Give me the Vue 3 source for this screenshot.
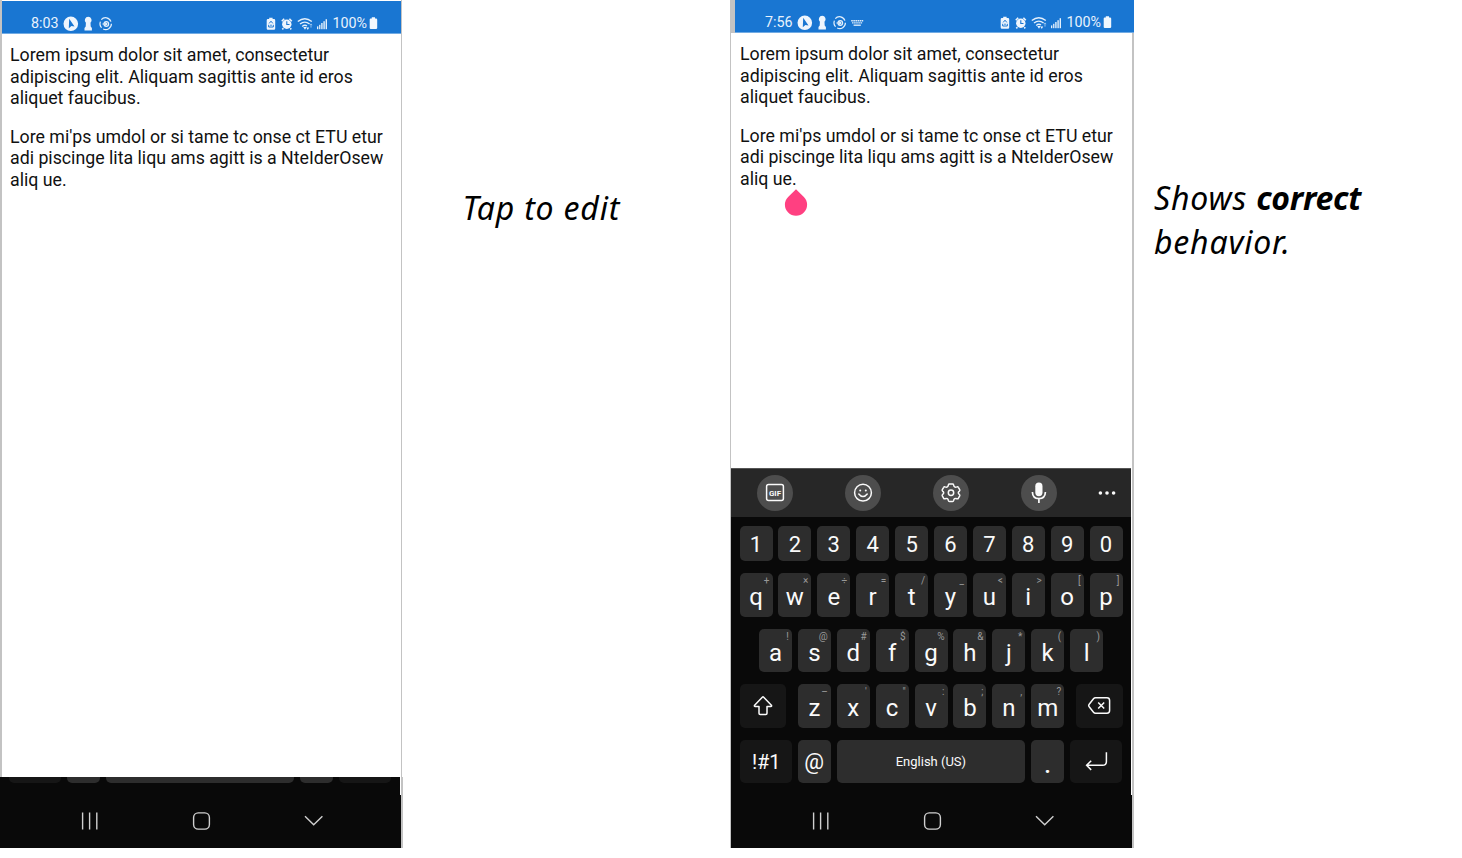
<script setup>
const paragraphs = [
  ['Lorem ipsum dolor sit amet, consectetur', 'adipiscing elit. Aliquam sagittis ante id eros', 'aliquet faucibus.'],
  ["Lore mi'ps umdol or si tame tc onse ct ETU etur", 'adi piscinge lita liqu ams agitt is a NteIderOsew', 'aliq ue.'],
]
const phones = [
  { id: 'first', time: '8:03', keyboard: false },
  { id: 'second', time: '7:56', keyboard: true },
]
const digits = ['1', '2', '3', '4', '5', '6', '7', '8', '9', '0']
const pair = (letters, hints) => [...letters].map((c, i) => ({ c, hint: hints[i] }))
const rowQ = pair('qwertyuiop', '+×÷=/_<>[]')
const rowA = pair('asdfghjkl', '!@#$%&*()')
const rowZ = pair('zxcvbnm', "–'\":;,?")
</script>

<template>
  <main class="board">
    <template v-for="p in phones" :key="p.id">
      <section class="phone" :class="p.id">
        <header class="status">
          <span class="clock">{{ p.time }}</span>
          <svg class="notif" width="96" height="20" viewBox="0 0 96 20">
            <circle cx="8.800" cy="10.800" r="7.300" fill="#eef5fd" />
            <path d="M7.200 5.800 L12.500 13.600 L9.400 12.900 L6.800 15.200 Z" fill="#1976d2" />
            <path d="M26.200 3.800 a3.400 3.400 0 0 1 2.300 5.900 L28.700 13.400 L29.900 15 V17.600 H22.500 V15 L23.700 13.400 L23.900 9.700 A3.400 3.400 0 0 1 26.200 3.800Z" fill="#eef5fd" />
            <g fill="none" stroke="#e4f0fc" stroke-width="1.200">
              <path d="M39.300 6.600 A5.700 5.700 0 0 1 48.900 8.600" />
              <path d="M49.400 10.800 A5.700 5.700 0 0 1 41.200 16" />
              <path d="M39.600 14.600 A5.700 5.700 0 0 1 38.400 8.600" />
              <circle cx="44.300" cy="11" r="2.300" />
              <path d="M40.400 11 H44.800 M43.300 9.500 L44.900 11 L43.300 12.500" />
            </g>
            <g v-if="p.keyboard" stroke="#dcebfa" stroke-width="1.400" fill="none">
              <path d="M55.200 8.800 H67.200" stroke-dasharray="1.600 .5" />
              <path d="M56 10.900 H66.600" stroke-dasharray="1.600 .5" />
              <path d="M57.600 13.200 H64.800" />
            </g>
          </svg>
          <svg class="system" width="66" height="20" viewBox="0 0 66 20">
            <path d="M3.200 4.800 h3.400 v1.300 h1.400 q1.200 0 1.200 1.200 V15.500 q0 1.200 -1.200 1.200 H1.900 q-1.200 0 -1.200 -1.200 V7.300 q0 -1.200 1.200 -1.200 h1.300Z" fill="#eef5fd" />
            <path d="M3.200 10.400 L5 8.200 L6.800 10.400 M2.700 11.800 V14 H7.300 V11.800 M4.200 12.200 H5.800" stroke="#1976d2" stroke-width="1" fill="none" />
            <circle cx="20.800" cy="11.200" r="4.700" fill="#eef5fd" />
            <path d="M20.800 8.200 V11.500 H23.500" fill="none" stroke="#1976d2" stroke-width="1.100" />
            <path d="M15.800 8.200 L18.200 5.800 M23.400 5.800 L25.800 8.200 M17.400 15.200 L16.300 16.400 M24.200 15.200 L25.300 16.400" stroke="#eef5fd" stroke-width="1.600" />
            <g fill="none" stroke="#e4f0fc" stroke-width="1.350">
              <path d="M31.800 8.500 Q38.800 2.900 45.800 8.500" />
              <path d="M34 11.100 Q38.800 7.100 43.600 11.100" />
              <path d="M36.200 13.500 Q38.800 11.300 41 13.100" />
            </g>
            <path d="M37.200 14 H40.600 L39 16.800Z M40.400 14.600 h2.800 l-1.400 2.400Z" fill="#eef5fd" />
            <path d="M45 14.600 V11 M43.900 12.100 L45 10.900 L46.100 12.100" stroke="#9fc7ef" fill="none" stroke-width=".9" />
            <g fill="#e4f0fc">
              <rect x="51" y="13.400" width="1.300" height="2.800" />
              <rect x="53.100" y="11.800" width="1.300" height="4.400" />
              <rect x="55.200" y="10" width="1.400" height="6.200" />
              <rect x="57.400" y="8.200" width="1.400" height="8" />
              <rect x="59.600" y="6.200" width="1.400" height="10" />
            </g>
          </svg>
          <span class="percent">100%</span>
          <svg class="battery" width="9" height="14" viewBox="0 0 9 14">
            <path d="M2.800 1.200 H6 V2.400 H7 Q8.200 2.400 8.200 3.600 V11.900 Q8.200 13 7 13 H1.800 Q.7 13 .7 11.900 V3.600 Q.7 2.400 1.800 2.400 H2.800Z" fill="#f1f7fe" />
          </svg>
        </header>

        <article class="doc">
          <p v-for="(lines, i) in paragraphs" :key="i">
            <span v-for="line in lines" :key="line" class="line">{{ line }}</span>
          </p>
          <svg v-if="p.keyboard" class="caret" width="24" height="28" viewBox="0 0 24 28">
            <path d="M12 .3 L19.900 7.900 A11.100 11.100 0 1 1 4.100 7.900Z" fill="#ff4081" />
          </svg>
        </article>

        <div v-if="p.keyboard" class="keyboard">
          <div class="tools">
            <span class="tool">
              <svg width="36" height="36" viewBox="0 0 36 36">
                <rect x="9.600" y="9.600" width="16.800" height="16" rx="2" fill="none" stroke="#fafafa" stroke-width="1.500" />
                <text x="18" y="20.500" text-anchor="middle" class="gif">GIF</text>
              </svg>
            </span>
            <span class="tool">
              <svg width="36" height="36" viewBox="0 0 36 36" fill="none" stroke="#fafafa" stroke-width="1.500">
                <circle cx="18" cy="17.700" r="8.400" />
                <path d="M13.800 19 Q18 24.200 22.200 19" stroke-linecap="round" />
                <circle cx="15.200" cy="15.400" r="1" fill="#fafafa" stroke="none" />
                <circle cx="20.800" cy="15.400" r="1" fill="#fafafa" stroke="none" />
              </svg>
            </span>
            <span class="tool">
              <svg width="36" height="36" viewBox="0 0 36 36" fill="none" stroke="#fafafa" stroke-width="1.500" stroke-linejoin="round">
                <path d="M16.400 9 H19.600 Q20.400 9 20.600 9.900 Q21 12.900 23.900 11.900 Q24.900 11.500 25.300 12.300 L26.700 14.700 Q27.100 15.500 26.400 16.100 Q24.200 17.800 26.400 19.500 Q27.100 20.100 26.700 20.900 L25.300 23.300 Q24.900 24.100 23.900 23.700 Q21 22.700 20.600 25.700 Q20.400 26.600 19.600 26.600 H16.400 Q15.600 26.600 15.400 25.700 Q15 22.700 12.100 23.700 Q11.100 24.100 10.700 23.300 L9.300 20.900 Q8.900 20.100 9.600 19.500 Q11.800 17.800 9.600 16.100 Q8.900 15.500 9.300 14.700 L10.700 12.300 Q11.100 11.500 12.100 11.900 Q15 12.900 15.400 9.900 Q15.600 9 16.400 9Z" />
                <circle cx="18" cy="17.800" r="2.700" />
              </svg>
            </span>
            <span class="tool">
              <svg width="36" height="36" viewBox="0 0 36 36">
                <rect x="14.300" y="7.600" width="7.200" height="13.600" rx="3.600" fill="#fafafa" />
                <path d="M11.400 17 Q11.600 23.600 17.900 23.600 Q24.200 23.600 24.400 17 M17.900 23.600 V28" fill="none" stroke="#fafafa" stroke-width="1.700" />
              </svg>
            </span>
            <svg class="more" width="18" height="6" viewBox="0 0 18 6" fill="#fafafa">
              <circle cx="2.400" cy="3" r="1.800" /><circle cx="9" cy="3" r="1.800" /><circle cx="15.600" cy="3" r="1.800" />
            </svg>
          </div>
          <div class="keys">
            <div class="row digits">
              <span v-for="d in digits" :key="d" class="key">{{ d }}</span>
            </div>
            <div class="row">
              <span v-for="k in rowQ" :key="k.c" class="key">{{ k.c }}<i class="hint">{{ k.hint }}</i></span>
            </div>
            <div class="row middle">
              <span v-for="k in rowA" :key="k.c" class="key">{{ k.c }}<i class="hint">{{ k.hint }}</i></span>
            </div>
            <div class="row spread">
              <span class="key dark shift">
                <svg width="22" height="22" viewBox="0 0 22 22" fill="none" stroke="#fafafa" stroke-width="1.500" stroke-linejoin="round">
                  <path d="M10.300 2.200 Q11 1.500 11.700 2.200 L19.400 10.200 Q20 11.400 18.800 11.500 H15 V18.300 Q15 19.500 13.800 19.500 H8.200 Q7 19.500 7 18.300 V11.500 H3.200 Q2 11.400 2.600 10.200Z" />
                </svg>
              </span>
              <div class="group">
                <span v-for="k in rowZ" :key="k.c" class="key">{{ k.c }}<i class="hint">{{ k.hint }}</i></span>
              </div>
              <span class="key dark shift">
                <svg width="24" height="20" viewBox="0 0 24 20" fill="none" stroke="#fafafa" stroke-width="1.500" stroke-linejoin="round">
                  <path d="M8.500 2.800 H20 Q22.600 2.800 22.600 5.400 V15.600 Q22.600 18.200 20 18.200 H8.500 Q7.300 18.200 6.500 17.200 L2 11.500 Q1.300 10.500 2 9.500 L6.500 3.800 Q7.300 2.800 8.500 2.800Z" />
                  <path d="M11.200 7.400 L17.200 13.600 M17.200 7.400 L11.200 13.600" />
                </svg>
              </span>
            </div>
            <div class="row bottom">
              <span class="key dark wide sym">!#1</span>
              <span class="key at">@</span>
              <span class="key space">English (US)</span>
              <span class="key dot">.</span>
              <span class="key dark wide">
                <svg width="24" height="22" viewBox="0 0 24 22" fill="none" stroke="#fafafa" stroke-width="1.500">
                  <path d="M22.400 1.200 V10.500 Q22.400 14.300 18.600 14.300 H2.800 M7.200 9.700 L2.600 14.300 L7.200 18.900" />
                </svg>
              </span>
            </div>
          </div>
        </div>
        <div v-else class="cropped">
          <span class="stub dark wide"></span>
          <span class="stub"></span>
          <span class="stub long"></span>
          <span class="stub"></span>
          <span class="stub dark wide"></span>
        </div>

        <nav class="nav">
          <svg width="20" height="20" viewBox="0 0 20 20" stroke="#d0d0d0" stroke-width="1.400"><path d="M2.600 1.500 V18.500 M9.600 1.500 V18.500 M16.800 1.500 V18.500" /></svg>
          <svg width="20" height="20" viewBox="0 0 20 20" fill="none" stroke="#d0d0d0" stroke-width="1.400"><rect x="1.600" y="1.900" width="15.800" height="16.200" rx="4.600" /></svg>
          <svg width="20" height="20" viewBox="0 0 20 20" fill="none" stroke="#d0d0d0" stroke-width="1.400"><path d="M2 5.200 L10.700 13.800 L19.400 5.200" /></svg>
        </nav>
      </section>
      <p v-if="!p.keyboard" class="caption tap">Tap to edit</p>
      <p v-else class="caption shows"><span>Shows <b>correct</b></span><span>behavior.</span></p>
    </template>
  </main>
</template>

<style>
html, body { margin: 0; background: #fff; }
</style>

<style scoped>
.board { display: grid; grid-template-columns: 403px 327px 404px 328px; height: 858px; overflow: hidden; font-family: Roboto, sans-serif; }
.phone { height: 848px; display: flex; flex-direction: column; box-sizing: border-box; background: #fff; }
.first { background: linear-gradient(#c3c3c3, #c3c3c3) 0 0 / 2px 777px no-repeat, linear-gradient(#c3c3c3, #c3c3c3) 401px 0 / 1px 777px no-repeat, linear-gradient(#c3c3c3, #c3c3c3) 401px 777px / 2px 71px no-repeat; }
.second { background: linear-gradient(#c3c3c3, #c3c3c3) 0 0 / 5px 33px no-repeat, linear-gradient(#c3c3c3, #c3c3c3) 0 33px / 1px 815px no-repeat, linear-gradient(#c3c3c3, #c3c3c3) 402px 33px / 2px 815px no-repeat; }
.status { display: flex; align-items: flex-start; box-sizing: border-box; flex: none; background: #1976d2; color: #e8f2fd; border-bottom: 1px solid #72abe3; }
.first .status { margin: 1px 2px 0; height: 33px; padding: 12px 0 0 29px; }
.second .status { margin: 0 0 0 5px; height: 33px; padding: 12px 0 0 30px; }
.clock { width: 31px; font-size: 14.300px; line-height: 20px; white-space: nowrap; }
.system { margin-left: 108px; }
.percent { width: 35px; margin-left: .5px; font-size: 14.300px; line-height: 20px; }
.battery { margin: 3px 0 0 1.200px; }
.doc { position: relative; box-sizing: border-box; padding: 11.300px 0 0 10px; font-size: 17.760px; line-height: 21.300px; color: #111; }
.first .doc { height: 743px; }
.second .doc { height: 435px; }
.doc p { margin: 0 0 18px; }
.line { display: block; white-space: nowrap; }
.caret { position: absolute; left: 54px; top: 156px; }
.keyboard { width: 400px; margin-left: 1px; height: 327px; background: #090909; }
.tools { height: 49px; background: #272727; border-top: 1px solid #555; box-sizing: border-box; display: flex; align-items: center; padding: 0 15px 0 26px; }
.tool { width: 36px; height: 36px; border-radius: 50%; background: #4d4d4d; margin-right: 52px; }
.tool:nth-child(4) { margin-right: 41px; }
.tool svg { display: block; }
.gif { font: 700 8px Roboto, sans-serif; fill: #fafafa; }
.keys { padding: 9.100px 8.500px 0; }
.row { display: flex; gap: 5.900px; margin-bottom: 12px; height: 43.400px; }
.row.digits { height: 35.300px; }
.row.middle { justify-content: center; }
.row.spread { justify-content: space-between; }
.group { display: flex; gap: 5.900px; }
.key { position: relative; flex: none; width: 33px; box-sizing: border-box; border-radius: 5px; background: #2d2d2d; color: #fafafa; font-size: 24px; line-height: 48.400px; text-align: center; }
.digits .key { font-size: 22px; line-height: 37px; }
.hint { position: absolute; right: 3px; top: 2px; font-size: 10px; line-height: 12px; font-style: normal; color: #999; }
.dark { background: #161616; }
.shift { width: 46.500px; }
.wide { width: 52.300px; }
.key svg { display: block; margin: 11px auto 0; }
.key.sym { font-size: 20px; line-height: 44px; padding-left: 1px; letter-spacing: -.2px; }
.key.at { font-size: 22px; line-height: 43px; }
.key.space { width: 188.700px; font-size: 13px; line-height: 44px; }
.key.dot { line-height: 50px; font-weight: 500; }
.cropped { width: 391px; height: 18px; padding-left: 8.600px; background: #090909; display: flex; gap: 5.900px; flex: none; box-sizing: content-box; }
.stub { width: 33px; height: 5.500px; border-radius: 0 0 5px 5px; background: #2d2d2d; }
.stub.dark { background: #161616; }
.stub.wide { width: 52.300px; }
.stub.long { width: 188.700px; }
.nav { height: 53px; width: 401px; flex: none; box-sizing: border-box; background: #090909; display: flex; justify-content: space-between; padding: 16px 78px 0 80px; }
.second .nav { margin-left: 1px; }
.caption { margin: 0; font-family: "Noto Sans", sans-serif; font-style: italic; color: #000; font-size: 32px; line-height: 44px; letter-spacing: .8px; white-space: nowrap; }
.caption span { display: block; }
.caption b { letter-spacing: -.3px; }
.tap { padding: 186px 0 0 59.500px; }
.shows { padding: 176px 0 0 20px; }
</style>
